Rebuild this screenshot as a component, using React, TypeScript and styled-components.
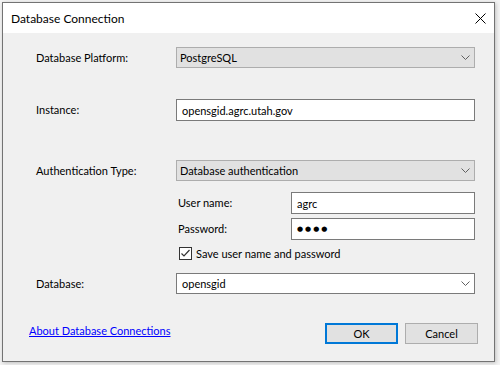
import styled, { createGlobalStyle } from "styled-components";

const GlobalStyle = createGlobalStyle`
  html, body {
    margin: 0;
    padding: 0;
    background: #f3f3f3;
  }
  body {
    font-family: Lato, "Noto Sans", sans-serif;
    font-size: 11px;
    color: #000;
  }
`;

const Page = styled.div`
  width: 500px;
  height: 365px;
  padding: 2px 0 0 2px;
  box-sizing: border-box;
`;

const Window = styled.div`
  width: 493px;
  height: 360px;
  box-sizing: border-box;
  border: 1px solid #737373;
  background: #f0f0f0;
  display: flex;
  flex-direction: column;
  box-shadow: 1px 1px 4px rgba(0, 0, 0, 0.22);
`;

const TitleBar = styled.div`
  height: 30px;
  flex: none;
  background: #fff;
  display: flex;
  align-items: center;
  justify-content: space-between;
  padding: 0 8px 0 8px;
  font-size: 12px;
`;

const Body = styled.div`
  display: flex;
  flex-direction: column;
  padding: 0 19px 0 33px;
`;

const Row = styled.div<{ $top: number }>`
  display: grid;
  grid-template-columns: 140px 299px;
  align-items: center;
  margin-top: ${(p) => p.$top}px;
`;

const Label = styled.div`
  line-height: 16px;
  white-space: nowrap;
`;

const Combo = styled.div<{ $editable?: boolean }>`
  height: 21px;
  box-sizing: border-box;
  border: 1px solid ${(p) => (p.$editable ? "#7a7a7a" : "#adadad")};
  background: ${(p) => (p.$editable ? "#fff" : "#e1e1e1")};
  display: flex;
  align-items: center;
  justify-content: space-between;
  padding: 0 4px 0 ${(p) => (p.$editable ? 5 : 3)}px;
`;

const Field = styled.div<{ $h?: number }>`
  height: ${(p) => p.$h ?? 22}px;
  box-sizing: border-box;
  border: 1px solid #7a7a7a;
  background: #fff;
  display: flex;
  align-items: center;
  padding: 0 5px;
`;

const Dots = styled.span`
  font-family: "DejaVu Sans", sans-serif;
  font-size: 7px;
  letter-spacing: 2px;
`;

const SubRow = styled.div<{ $top: number }>`
  display: grid;
  grid-template-columns: 113px 184px;
  align-items: center;
  margin-top: ${(p) => p.$top}px;
  padding-left: 142px;
`;

const CheckRow = styled.label<{ $top: number }>`
  display: flex;
  align-items: center;
  gap: 4px;
  margin-top: ${(p) => p.$top}px;
  padding-left: 143px;
  height: 13px;
  line-height: 16px;
`;

const Footer = styled.div`
  display: flex;
  align-items: flex-start;
  margin-top: 29px;
  padding: 0 16px 0 26px;
`;

const Link = styled.a`
  color: #0000ff;
  text-decoration: underline;
  line-height: 16px;
  cursor: pointer;
`;

const Buttons = styled.div`
  margin-left: auto;
  display: flex;
  gap: 7px;
`;

const Button = styled.button<{ $default?: boolean }>`
  width: 73px;
  height: 21px;
  box-sizing: border-box;
  border: ${(p) => (p.$default ? "2px solid #0078d7" : "1px solid #adadad")};
  background: #e1e1e1;
  font: inherit;
  color: #000;
  padding: 0;
  margin: 0;
`;

const Chevron = () => (
  <svg width="9" height="5" viewBox="0 0 9 5">
    <path d="M0.5 0.5 L4.5 4.5 L8.5 0.5" fill="none" stroke="#606060" strokeWidth="1" />
  </svg>
);

const CloseIcon = () => (
  <svg width="11" height="11" viewBox="0 0 11 11">
    <path d="M0.5 0.5 L10.5 10.5 M10.5 0.5 L0.5 10.5" stroke="#000" strokeWidth="1" />
  </svg>
);

const CheckBox = () => (
  <svg width="13" height="13" viewBox="0 0 13 13">
    <rect x="0.5" y="0.5" width="12" height="12" fill="#fff" stroke="#333" />
    <path d="M2.5 6.5 L5 9 L10.5 3" fill="none" stroke="#333" strokeWidth="1.2" />
  </svg>
);

export default function App() {
  return (
    <Page>
      <GlobalStyle />
      <Window>
        <TitleBar>
          <span>Database Connection</span>
          <CloseIcon />
        </TitleBar>
        <Body>
          <Row $top={14}>
            <Label>Database Platform:</Label>
            <Combo>
              <span>PostgreSQL</span>
              <Chevron />
            </Combo>
          </Row>
          <Row $top={31}>
            <Label>Instance:</Label>
            <Field>opensgid.agrc.utah.gov</Field>
          </Row>
          <Row $top={39}>
            <Label>Authentication Type:</Label>
            <Combo>
              <span>Database authentication</span>
              <Chevron />
            </Combo>
          </Row>
          <SubRow $top={11}>
            <Label>User name:</Label>
            <Field>agrc</Field>
          </SubRow>
          <SubRow $top={4}>
            <Label>Password:</Label>
            <Field>
              <Dots>●●●●</Dots>
            </Field>
          </SubRow>
          <CheckRow $top={7}>
            <CheckBox />
            <span>Save user name and password</span>
          </CheckRow>
          <Row $top={13}>
            <Label>Database:</Label>
            <Combo $editable>
              <span>opensgid</span>
              <Chevron />
            </Combo>
          </Row>
        </Body>
        <Footer>
          <Link>About Database Connections</Link>
          <Buttons>
            <Button $default>OK</Button>
            <Button>Cancel</Button>
          </Buttons>
        </Footer>
      </Window>
    </Page>
  );
}
